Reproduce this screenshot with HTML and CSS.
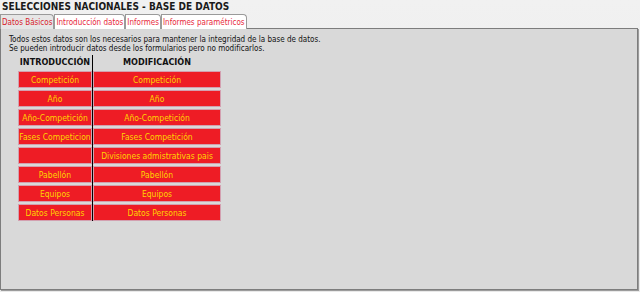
FILE: index.html
```html
<!DOCTYPE html>
<html lang="es">

<head>
    <meta charset="UTF-8" />
    <title>Selecciones Nacionales - Base de datos</title>
    <link rel="stylesheet" href="styles.css">
</head>

<body>
    <h1 class="title">SELECCIONES NACIONALES - BASE DE DATOS</h1>

    <nav class="tabs">
        <a class="tab active" href="#">Datos Básicos</a>
        <a class="tab" href="#">Introducción datos</a>
        <a class="tab" href="#">Informes</a>
        <a class="tab" href="#">Informes paramétricos</a>
    </nav>

    <section class="panel">
        <p class="intro">
            Todos estos datos son los necesarios para mantener la integridad de la base de datos.<br>
            Se pueden introducir datos desde los formularios pero no modificarlos.
        </p>

        <div class="forms">
            <div class="col col-in">
                <div class="col-head">INTRODUCCIÓN</div>
                <a class="btn" href="#">Competición</a>
                <a class="btn" href="#">Año</a>
                <a class="btn" href="#">Año-Competición</a>
                <a class="btn" href="#">Fases Competicion</a>
                <a class="btn" href="#"></a>
                <a class="btn" href="#">Pabellón</a>
                <a class="btn" href="#">Equipos</a>
                <a class="btn" href="#">Datos Personas</a>
            </div>
            <div class="col col-mod">
                <div class="col-head">MODIFICACIÓN</div>
                <a class="btn" href="#">Competición</a>
                <a class="btn" href="#">Año</a>
                <a class="btn" href="#">Año-Competición</a>
                <a class="btn" href="#">Fases Competición</a>
                <a class="btn" href="#">Divisiones admistrativas pais</a>
                <a class="btn" href="#">Pabellón</a>
                <a class="btn" href="#">Equipos</a>
                <a class="btn" href="#">Datos Personas</a>
            </div>
        </div>
    </section>
</body>

</html>
```

FILE: styles.css
```css
:root {
    --page-bg: linear-gradient(180deg, #f1f1f1 0%, #e9e9e9 100%);
    --panel-bg: #d9d9d9;
    --panel-border: #7d7d7d;
    --tab-red: #e8283a;
    --btn-red: #ee1c25;
    --btn-txt: #ffd400;
}

* {
    box-sizing: border-box;
    margin: 0;
    padding: 0;
}

html,
body {
    height: 100%;
}

body {
    font-family: "DejaVu Sans Condensed", "DejaVu Sans", sans-serif;
    font-size: 8px;
    color: #111;
    background: var(--page-bg);
    display: flex;
    flex-direction: column;
    overflow: hidden;
}

.title {
    font-size: 10px;
    font-weight: bold;
    line-height: 14px;
    padding-left: 2px;
    color: #1a1a1a;
}

.tabs {
    display: flex;
    height: 15px;
    position: relative;
    z-index: 1;
}

.tab {
    display: flex;
    align-items: center;
    padding: 0 1px;
    height: 15px;
    border: 1px solid #9a9a9a;
    border-bottom: none;
    border-top-right-radius: 4px;
    background: #fff;
    color: var(--tab-red);
    text-decoration: none;
    white-space: nowrap;
}

.tab.active {
    background: #e6e6e6;
    color: #d81c2c;
}

.panel {
    width: 638px;
    height: 262px;
    margin-top: -1px;
    background: var(--panel-bg);
    border: 1px solid var(--panel-border);
    box-shadow: 1px 1px 0 #9c9c9c;
    padding: 6px 0 0 8px;
}

.intro {
    line-height: 9px;
}

.forms {
    display: flex;
    margin: 2px 0 0 9px;
}

.col {
    display: flex;
    flex-direction: column;
    gap: 2px;
}

.col-in {
    width: 75px;
    border-right: 1px solid #000;
}

.col-mod {
    width: 128px;
}

.col-head {
    height: 14px;
    font-size: 9px;
    font-weight: bold;
    text-align: center;
    line-height: 14px;
    color: #111;
}

.btn {
    height: 17px;
    display: flex;
    align-items: center;
    justify-content: center;
    font-size: 8.5px;
    background: var(--btn-red);
    border: 1px solid #d3a0b0;
    color: var(--btn-txt);
    text-decoration: none;
    white-space: nowrap;
    overflow: hidden;
}
```
